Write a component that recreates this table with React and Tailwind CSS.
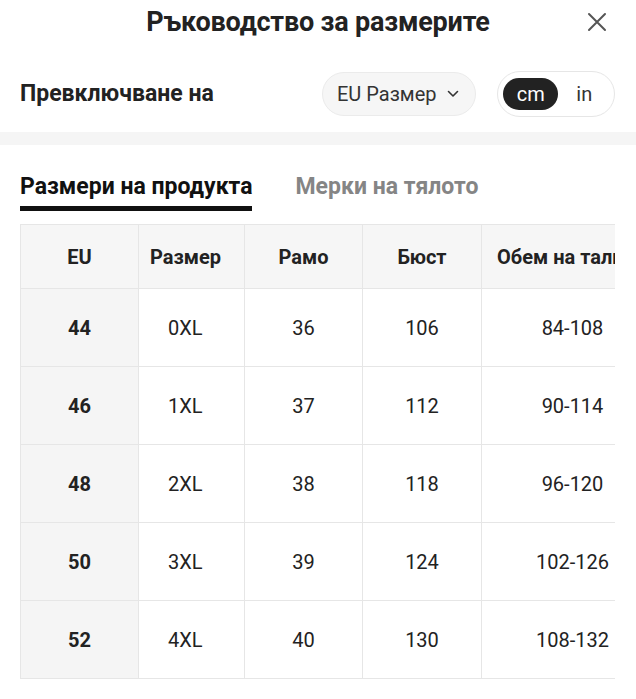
import React, { useState } from 'react';

const rows = [
  { eu: '44', size: '0XL', shoulder: '36', bust: '106', waist: '84-108', hip: '110', len: '68' },
  { eu: '46', size: '1XL', shoulder: '37', bust: '112', waist: '90-114', hip: '116', len: '69' },
  { eu: '48', size: '2XL', shoulder: '38', bust: '118', waist: '96-120', hip: '122', len: '70' },
  { eu: '50', size: '3XL', shoulder: '39', bust: '124', waist: '102-126', hip: '128', len: '71' },
  { eu: '52', size: '4XL', shoulder: '40', bust: '130', waist: '108-132', hip: '134', len: '72' },
];

const SizeGuide = () => {
  const [unit, setUnit] = useState('cm');
  const [tab, setTab] = useState(0);

  return (
    <div className="w-[636px] h-[699px] bg-white overflow-hidden text-[#222] font-['Roboto','Noto_Sans',sans-serif]">
      {/* Header */}
      <div className="relative h-[44px] flex items-center justify-center">
        <h1 className="text-[27px] font-bold tracking-[-0.2px] text-[#222]">Ръководство за размерите</h1>
        <button className="absolute right-[26px] top-[9px] w-[26px] h-[26px] flex items-center justify-center">
          <svg width="20" height="20" viewBox="0 0 20 20" fill="none" stroke="#555" strokeWidth="2" strokeLinecap="round">
            <path d="M2 2 L18 18 M18 2 L2 18" />
          </svg>
        </button>
      </div>

      {/* Switch row */}
      <div className="flex items-center h-[88px] pt-[12px] pl-[20px] pr-[21px]">
        <span className="text-[23px] font-bold flex-1">Превключване на</span>
        <button className="h-[44px] w-[154px] rounded-full bg-[#f6f6f6] border border-[#ebebeb] flex items-center pl-[14px] gap-[10px] text-[20px] text-[#333]">
          EU Размер
          <svg width="12" height="8" viewBox="0 0 12 8" fill="none" stroke="#333" strokeWidth="1.6" strokeLinecap="round" strokeLinejoin="round">
            <path d="M1.5 1.5 L6 6 L10.5 1.5" />
          </svg>
        </button>
        <div className="ml-[21px] h-[46px] w-[118px] rounded-full border border-[#e6e6e6] flex items-center px-[5px]">
          <button
            onClick={() => setUnit('cm')}
            className={`h-[32px] w-[56px] rounded-full text-[20px] ${unit === 'cm' ? 'bg-[#222] text-white' : 'text-[#333]'}`}
          >
            cm
          </button>
          <button
            onClick={() => setUnit('in')}
            className={`h-[32px] w-[50px] ml-[1px] rounded-full text-[20px] ${unit === 'in' ? 'bg-[#222] text-white' : 'text-[#333]'}`}
          >
            in
          </button>
        </div>
      </div>

      <div className="h-[13px] bg-[#f5f5f5]" />

      {/* Tabs */}
      <div className="flex items-end gap-[43px] px-[20px] h-[66px]">
        {['Размери на продукта', 'Мерки на тялото'].map((t, i) => (
          <button
            key={t}
            onClick={() => setTab(i)}
            className={`flex flex-col text-[23px] font-bold ${tab === i ? 'text-[#111]' : 'text-[#858585]'}`}
          >
            <span className="leading-[30px] pb-[4px]">{t}</span>
            <span className={`h-[5px] w-full ${tab === i ? 'bg-[#111]' : 'bg-transparent'}`} />
          </button>
        ))}
      </div>

      {/* Table */}
      <div className="mt-[13px] ml-[20px] w-[595px] overflow-hidden">
        <table className="table-fixed border-collapse w-[910px] text-[20px]">
          <colgroup>
            <col className="w-[118px]" />
            <col className="w-[106px]" />
            <col className="w-[118px]" />
            <col className="w-[119px]" />
            <col className="w-[182px]" />
            <col className="w-[130px]" />
            <col className="w-[137px]" />
          </colgroup>
          <thead>
            <tr className="h-[64px] bg-[#f6f6f6] text-[20px] font-bold">
              <th className="relative border border-[#e6e6e6] shadow-[6px_0_10px_-4px_rgba(0,0,0,0.08)]">EU</th>
              <th className="border border-[#e6e6e6] text-left pl-[11px]">Размер</th>
              <th className="border border-[#e6e6e6]">Рамо</th>
              <th className="border border-[#e6e6e6]">Бюст</th>
              <th className="border border-[#e6e6e6] text-left pl-[15px] whitespace-nowrap">Обем на талията</th>
              <th className="border border-[#e6e6e6]">Ханш</th>
              <th className="border border-[#e6e6e6]">Дължина</th>
            </tr>
          </thead>
          <tbody>
            {rows.map((r) => (
              <tr key={r.eu} className="h-[78px]">
                <td className="relative border border-[#e6e6e6] bg-[#f5f5f5] text-center font-bold shadow-[6px_0_10px_-4px_rgba(0,0,0,0.08)]">{r.eu}</td>
                <td className="border border-[#e6e6e6] pl-[29px]">{r.size}</td>
                <td className="border border-[#e6e6e6] text-center">{r.shoulder}</td>
                <td className="border border-[#e6e6e6] text-center">{r.bust}</td>
                <td className="border border-[#e6e6e6] text-center">{r.waist}</td>
                <td className="border border-[#e6e6e6] text-center">{r.hip}</td>
                <td className="border border-[#e6e6e6] text-center">{r.len}</td>
              </tr>
            ))}
          </tbody>
        </table>
      </div>
    </div>
  );
};

export default function App() {
  return <SizeGuide />;
}
